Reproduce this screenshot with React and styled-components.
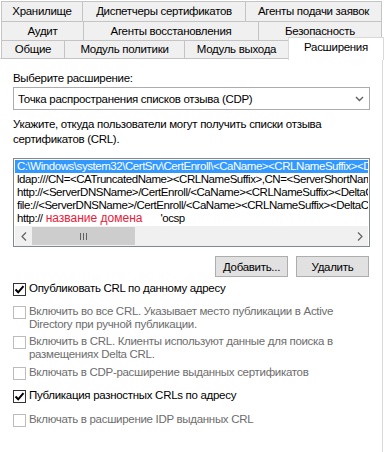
import React from "react";
import styled, { createGlobalStyle } from "styled-components";

const GlobalStyle = createGlobalStyle`
  body {
    margin: 0;
    background: #ffffff;
    font-family: "Liberation Sans", Arial, sans-serif;
    font-size: 11.5px;
    letter-spacing: -0.3px;
    color: #000000;
  }
`;

const tabRows = [
  [
    { label: "Хранилище", w: 82 },
    { label: "Диспетчеры сертификатов", w: 164 },
    { label: "Агенты подачи заявок", w: 137 },
  ],
  [
    { label: "Аудит", w: 83 },
    { label: "Агенты восстановления", w: 176 },
    { label: "Безопасность", w: 124 },
  ],
  [
    { label: "Общие", w: 64 },
    { label: "Модуль политики", w: 121 },
    { label: "Модуль выхода", w: 105 },
    { label: "Расширения", w: 96, active: true },
  ],
];

const rowHeights = [21, 20, 19];

const urls = [
  "C:\\Windows\\system32\\CertSrv\\CertEnroll\\<CaName><CRLNameSuffix><DeltaCRLAllowed>.crl",
  "ldap:///CN=<CATruncatedName><CRLNameSuffix>,CN=<ServerShortName>,CN=CDP,CN=Public Key Services",
  "http://<ServerDNSName>/CertEnroll/<CaName><CRLNameSuffix><DeltaCRLAllowed>.crl",
  "file://<ServerDNSName>/CertEnroll/<CaName><CRLNameSuffix><DeltaCRLAllowed>.crl",
];

const options = [
  { text: ["Опубликовать CRL по данному адресу"], checked: true, top: 5 },
  {
    text: [
      "Включить во все CRL. Указывает место публикации в Active",
      "Directory при ручной публикации.",
    ],
    disabled: true,
    top: 9,
  },
  {
    text: [
      "Включить в CRL. Клиенты используют данные для поиска в",
      "размещениях Delta CRL.",
    ],
    disabled: true,
    top: 4,
  },
  {
    text: ["Включать в CDP-расширение выданных сертификатов"],
    disabled: true,
    top: 5,
  },
  { text: ["Публикация разностных CRLs по адресу"], checked: true, top: 9 },
  {
    text: ["Включать в расширение IDP выданных CRL"],
    disabled: true,
    top: 10,
  },
];

const Check = () => (
  <svg width="11" height="11" viewBox="0 0 11 11">
    <path d="M1.5 5.5 L4.2 8.3 L9.5 2.2" fill="none" stroke="#000" strokeWidth="2" />
  </svg>
);

const Chevron = () => (
  <svg width="9" height="6" viewBox="0 0 9 6">
    <path d="M1 1 L4.5 4.5 L8 1" fill="none" stroke="#606060" strokeWidth="1.4" />
  </svg>
);

const ScrollArrow = ({ dir }) => (
  <svg width="6" height="9" viewBox="0 0 6 9">
    <path
      d={dir === "left" ? "M5 0.5 L1 4.5 L5 8.5" : "M1 0.5 L5 4.5 L1 8.5"}
      fill="none"
      stroke="#606060"
      strokeWidth="1.2"
    />
  </svg>
);

const App = () => {
  return (
    <Page>
      <GlobalStyle />
      <TabStrip>
        {tabRows.map((row, i) => (
          <TabRow key={i} $h={rowHeights[i]} $first={i === 0}>
            {row.map((tab) =>
              tab.active ? (
                <ActiveTab key={tab.label} $w={tab.w}>
                  {tab.label}
                </ActiveTab>
              ) : (
                <Tab key={tab.label} $w={tab.w} $h={rowHeights[i]}>
                  {tab.label}
                </Tab>
              )
            )}
          </TabRow>
        ))}
      </TabStrip>
      <Panel>
        <Label>Выберите расширение:</Label>
        <Combo>
          <span>Точка распространения списков отзыва (CDP)</span>
          <Chevron />
        </Combo>
        <Description>
          Укажите, откуда пользователи могут получить списки отзыва
          <br />
          сертификатов (CRL).
        </Description>
        <ListBox>
          <ListRows>
            {urls.map((u, i) => (
              <ListRow key={u} $selected={i === 0}>
                {u}
              </ListRow>
            ))}
            <ListRow>
              http://<Redacted>название домена</Redacted>'ocsp
            </ListRow>
          </ListRows>
          <HScroll>
            <ArrowBox>
              <ScrollArrow dir="left" />
            </ArrowBox>
            <Thumb>
              <Grip />
              <Grip />
              <Grip />
            </Thumb>
            <Track />
            <ArrowBox>
              <ScrollArrow dir="right" />
            </ArrowBox>
          </HScroll>
        </ListBox>
        <ButtonRow>
          <Button>Добавить...</Button>
          <Button>Удалить</Button>
        </ButtonRow>
        {options.map((opt) => (
          <OptionRow key={opt.text[0]} $top={opt.top} $disabled={opt.disabled}>
            <Box $disabled={opt.disabled}>{opt.checked && <Check />}</Box>
            <OptionText>
              {opt.text.map((line) => (
                <div key={line}>{line}</div>
              ))}
            </OptionText>
          </OptionRow>
        ))}
      </Panel>
    </Page>
  );
};

export default App;

const Page = styled.div`
  width: 384px;
  height: 452px;
  overflow: hidden;
  padding-top: 1px;
  box-sizing: border-box;
`;

const TabStrip = styled.div`
  position: relative;
  z-index: 2;
`;

const TabRow = styled.div`
  display: flex;
  align-items: flex-start;
  height: ${(p) => p.$h}px;
  margin-top: ${(p) => (p.$first ? 0 : -1)}px;
  margin-left: 1px;
`;

const Tab = styled.div`
  box-sizing: border-box;
  width: ${(p) => p.$w}px;
  height: ${(p) => p.$h}px;
  margin-right: -1px;
  border: 1px solid #c4c4c4;
  background: #f0f0f0;
  display: flex;
  align-items: center;
  justify-content: center;
  white-space: nowrap;
  padding-bottom: 1px;
`;

const ActiveTab = styled.div`
  box-sizing: border-box;
  width: ${(p) => p.$w}px;
  height: 23px;
  margin-top: -3px;
  border: 1px solid #d9d9d9;
  border-bottom: none;
  background: #ffffff;
  display: flex;
  justify-content: center;
  padding-top: 3px;
  white-space: nowrap;
`;

const Panel = styled.div`
  position: relative;
  z-index: 1;
  width: 383px;
  height: 400px;
  box-sizing: border-box;
  margin-top: -1px;
  border-top: 1px solid #d9d9d9;
  border-right: 1px solid #d9d9d9;
  background: #ffffff;
  padding: 12px 0 0 13px;
`;

const Label = styled.div`
  line-height: 15px;
`;

const Combo = styled.div`
  box-sizing: border-box;
  width: 357px;
  height: 23px;
  margin-top: 1px;
  border: 1px solid #acacac;
  background: #ffffff;
  display: flex;
  align-items: center;
  justify-content: space-between;
  padding: 0 5px 0 4px;
  white-space: nowrap;
`;

const Description = styled.div`
  margin-top: 7px;
  line-height: 15px;
`;

const ListBox = styled.div`
  box-sizing: border-box;
  width: 357px;
  height: 89px;
  margin-top: 11px;
  border: 1px solid #828790;
  padding: 1px 1px 0 1px;
  background: #ffffff;
  display: flex;
  flex-direction: column;
`;

const ListRows = styled.div`
  height: 66px;
  overflow: hidden;
`;

const ListRow = styled.div`
  height: 13px;
  line-height: 13px;
  padding-left: 2px;
  white-space: nowrap;
  overflow: hidden;
  letter-spacing: -0.45px;
  color: ${(p) => (p.$selected ? "#ffffff" : "#000000")};
  background: ${(p) => (p.$selected ? "#3399ff" : "transparent")};
`;

const Redacted = styled.span`
  color: #e8203a;
  font-size: 12px;
  letter-spacing: 0;
  padding: 0 18px 0 3px;
`;

const HScroll = styled.div`
  height: 20px;
  display: flex;
  background: #f0f0f0;
`;

const ArrowBox = styled.div`
  width: 17px;
  display: flex;
  align-items: center;
  justify-content: center;
`;

const Thumb = styled.div`
  width: 103px;
  margin: 1px 0;
  background: #cdcdcd;
  display: flex;
  align-items: center;
  justify-content: center;
  gap: 2px;
`;

const Grip = styled.div`
  width: 1px;
  height: 7px;
  background: #606060;
`;

const Track = styled.div`
  flex: 1;
`;

const ButtonRow = styled.div`
  width: 356px;
  margin-top: 9px;
  display: flex;
  justify-content: flex-end;
  gap: 8px;
`;

const Button = styled.div`
  box-sizing: border-box;
  width: 73px;
  height: 21px;
  border: 1px solid #adadad;
  background: #e1e1e1;
  display: flex;
  align-items: center;
  justify-content: center;
`;

const OptionRow = styled.div`
  display: flex;
  align-items: flex-start;
  margin-top: ${(p) => p.$top}px;
  color: ${(p) => (p.$disabled ? "#6d6d6d" : "#000000")};
`;

const Box = styled.div`
  box-sizing: border-box;
  width: 13px;
  height: 13px;
  margin-top: 1px;
  margin-right: 3px;
  border: 1px solid ${(p) => (p.$disabled ? "#bcbcbc" : "#333333")};
  background: #ffffff;
  display: flex;
  align-items: center;
  justify-content: center;
  flex-shrink: 0;
`;

const OptionText = styled.div`
  line-height: 13px;
`;
